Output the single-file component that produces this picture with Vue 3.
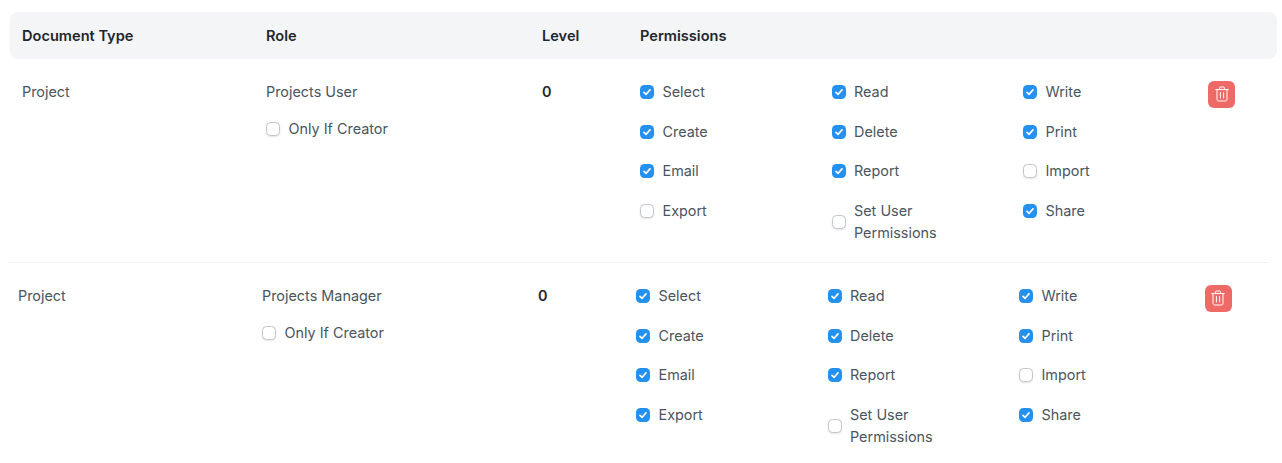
<script setup>
const rows = [
  { id: 1, role: 'Projects User', cls: 'first', on: ['Select','Read','Write','Create','Delete','Print','Email','Report','Share'] },
  { id: 2, role: 'Projects Manager', cls: 'second', on: ['Select','Read','Write','Create','Delete','Print','Email','Report','Export','Share'] },
]
const perms = ['Select','Read','Write','Create','Delete','Print','Email','Report','Import','Export','Set User Permissions','Share']
</script>

<template>
  <div class="page">
    <div class="head">
      <div>Document Type</div>
      <div>Role</div>
      <div>Level</div>
      <div>Permissions</div>
    </div>
    <div v-for="r in rows" :key="r.id" class="row" :class="r.cls">
      <div class="cell">Project</div>
      <div class="role">
        <div class="cell">{{ r.role }}</div>
        <label class="check creator">
          <span class="box"></span>
          <span>Only If Creator</span>
        </label>
      </div>
      <div class="cell level">0</div>
      <div class="perms">
        <label v-for="p in perms" :key="p" class="check" :class="{ wrap: p === 'Set User Permissions' }">
          <span class="box" :class="{ on: r.on.includes(p) }">
            <svg v-if="r.on.includes(p)" viewBox="0 0 14 14" width="14" height="14">
              <path d="M4 7.3 6.1 9.3 10 4.9" fill="none" stroke="#fff" stroke-width="1.7" stroke-linecap="round" stroke-linejoin="round" />
            </svg>
          </span>
          <span class="name">{{ p }}</span>
        </label>
      </div>
      <div class="actions">
        <button class="del" type="button" aria-label="Delete">
          <svg viewBox="0 0 16 16" width="16" height="16" fill="none" stroke="#fff" stroke-width="1" stroke-linecap="round" stroke-linejoin="round">
            <path d="M1.7 3.6h12.6" />
            <path d="M5.6 3.6V1.6c0-.4.3-.6.6-.6h3.6c.3 0 .6.2.6.6v2" />
            <path d="M3 3.6v9.9c0 .8.6 1.5 1.4 1.5h7.2c.8 0 1.4-.7 1.4-1.5V3.6" />
            <path d="M6.4 6.5v5.5M9.6 6.5v5.5" />
          </svg>
        </button>
      </div>
    </div>
  </div>
</template>

<style scoped>
.page {
  width: 1282px;
  height: 463px;
  overflow: hidden;
  padding-top: 12px;
  box-sizing: border-box;
  font-family: Inter, "Noto Sans", sans-serif;
  font-size: 14.4px;
  line-height: 22px;
  color: #4a5560;
}
.head {
  display: grid;
  grid-template-columns: 244px 276px 98px 1fr;
  align-items: center;
  height: 46.5px;
  box-sizing: border-box;
  margin: 0 5px 0 10px;
  padding: 1px 0 0 12px;
  background: #f4f5f6;
  border-radius: 8px;
  font-size: 14.6px;
  font-weight: 600;
  color: #1f272e;
}
.row {
  display: grid;
  grid-template-columns: 244px 276px 98px 568px 40px;
  padding-top: 22px;
  padding-bottom: 18px;
}
.first {
  margin-left: 8px;
  margin-right: 14px;
  padding-left: 14px;
  border-bottom: 1px solid #eef0f2;
}
.second {
  padding-left: 18px;
}
.second .actions {
  padding-left: 0.5px;
}
.role {
  display: flex;
  flex-direction: column;
  gap: 15px;
}
.level {
  font-weight: 600;
  color: #1f272e;
}
.perms {
  display: grid;
  grid-template-columns: repeat(3, 191.5px);
  grid-template-rows: 40.2px 39.5px 39.4px auto;
  align-items: start;
}
.check {
  display: flex;
  align-items: center;
  gap: 8.5px;
}
.wrap .name {
  width: 90px;
}
.box {
  flex: none;
  width: 14px;
  height: 14px;
  box-sizing: border-box;
  border: 1px solid #c0c6cc;
  border-radius: 4.5px;
  background: #fff;
  box-shadow: 0 1px 2px rgba(0, 0, 0, 0.1);
  display: flex;
}
.box.on {
  border: none;
  background: #2490ef;
  box-shadow: none;
}
.del {
  width: 27px;
  height: 27px;
  padding: 0;
  border: none;
  border-radius: 6px;
  background: #ed6a67;
  display: flex;
  align-items: center;
  justify-content: center;
}
</style>
